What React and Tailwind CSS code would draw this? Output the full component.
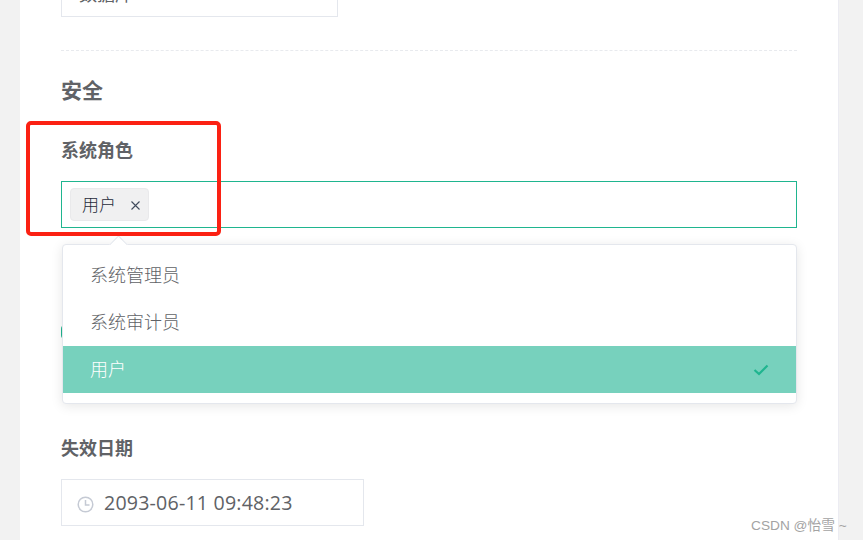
import React from "react";

const cjk = { fontFamily: '"Noto Sans CJK SC", "Liberation Sans", sans-serif' };

function Option({ children, active }) {
  return (
    <div className={"h-[47px] flex items-center justify-between pl-[27px] pr-[27px] text-[18px] font-light " + (active ? "bg-[#77d1bd] text-white" : "text-[#606266]")}>
      <span className="pb-[2px]">{children}</span>
      {active && (
        <svg width="16" height="14" viewBox="0 0 16 14" fill="none" stroke="#1fb58f" strokeWidth="2.2">
          <path d="M1.5 7 L6 11 L14.5 2.5" />
        </svg>
      )}
    </div>
  );
}

export default function App() {
  return (
    <div className="relative w-[863px] h-[540px] overflow-hidden bg-[#f2f2f2]" style={cjk}>
      <div className="relative flex flex-col ml-[20px] w-[819px] h-[540px] bg-white border-r border-[#ececf2] pl-[41px] pr-[41px]">
        <div className="-mt-[30px] w-[277px] h-[47px] shrink-0 border border-[#e4e7ed] flex items-center justify-between pl-[17px] pr-[20px] text-[18px] text-[#606266]">
          <span>数据库</span>
          <svg width="10" height="6" viewBox="0 0 10 6" fill="none" stroke="#c0c4cc"><path d="M1 1 L5 5 L9 1" /></svg>
        </div>

        <div className="mt-[33px] border-t border-dashed border-[#e8eaee]" />

        <h2 className="mt-[23px] h-[30px] leading-[30px] text-[21px] font-bold text-[#606266]">安全</h2>

        <div className="mt-[30px] h-[30px] leading-[30px] text-[18px] font-bold text-[#606266]">系统角色</div>

        <div className="mt-[17px] h-[47px] border border-[#1fb58f] flex items-center pl-[8px]">
          <div className="h-[33px] w-[79px] bg-[#f0f0f1] border border-[#e9e9eb] rounded-[4px] flex items-center pl-[11px] text-[17px] font-light text-[#1f2a3a]">
            <span className="pb-[2px]">用户</span>
            <svg className="ml-[15px] mt-[1px]" width="9" height="9" viewBox="0 0 9 9" fill="none" stroke="#3f4a5c" strokeWidth="1.1"><path d="M0.5 0.5 L8.5 8.5 M8.5 0.5 L0.5 8.5" /></svg>
          </div>
        </div>

        <div className="mt-[97px] w-[4px] h-[14px] rounded-l-full bg-[#1fb58f]" />

        <div className="mt-[93px] h-[30px] leading-[30px] text-[18px] font-bold text-[#606266]">失效日期</div>

        <div className="mt-[17px] w-[303px] h-[47px] border border-[#e4e7ed] flex items-center pl-[15px] text-[#606266]">
          <svg className="mt-[3px]" width="17" height="17" viewBox="0 0 17 17" fill="none" stroke="#c5cad4" strokeWidth="1.5">
            <circle cx="8.5" cy="8.5" r="7.3" />
            <path d="M8.5 4 V9 H12.5" />
          </svg>
          <span className="ml-[10px] text-[19.6px] tracking-[0.2px]" style={{ fontFamily: '"Open Sans", "Liberation Sans", sans-serif' }}>2093-06-11 09:48:23</span>
        </div>

        {/* 下拉菜单 */}
        <div className="absolute left-[42px] top-[244px] w-[735px] h-[160px] bg-white border border-[#e4e7ed] rounded-[4px] shadow-[0_2px_12px_0_rgba(0,0,0,0.1)] pt-[7px]">
          <div className="absolute left-[49px] -top-[7px] w-[13px] h-[13px] rotate-45 bg-white border-l border-t border-[#e4e7ed]" />
          <Option>系统管理员</Option>
          <Option>系统审计员</Option>
          <Option active>用户</Option>
        </div>

        {/* 红色标注框 */}
        <div className="absolute left-[6px] top-[121px] w-[195px] h-[115px] border-[4px] border-[#fb2113] rounded-[5px] pointer-events-none" />
      </div>

      {/* 水印 */}
      <div className="absolute left-[751px] top-[516px] text-[13.7px] text-[#a3a3a3]" style={{ fontFamily: '"Liberation Sans", "Noto Sans CJK SC", sans-serif' }}>CSDN @怡雪 ~</div>
    </div>
  );
}
